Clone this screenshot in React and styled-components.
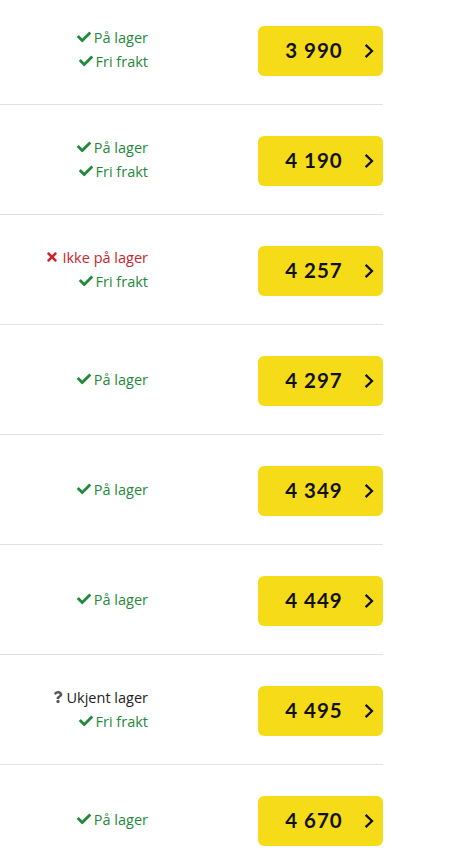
import React from 'react';
import styled, { createGlobalStyle } from 'styled-components';
import { FaCheck, FaTimes, FaQuestion } from 'react-icons/fa';

const GlobalStyle = createGlobalStyle`
  body {
    margin: 0;
    background: #fff;
    font-family: "Open Sans", Lato, sans-serif;
  }
`;

const List = styled.div`
  width: 383px;
  margin-top: -5px;
`;

const Row = styled.div`
  display: flex;
  align-items: center;
  justify-content: space-between;
  height: 109px;
  border-bottom: 1px solid #e2e2e6;
  &:last-child {
    border-bottom: none;
  }
`;

const Status = styled.div`
  width: 148px;
  display: flex;
  flex-direction: column;
  align-items: flex-end;
  gap: 1px;
  margin-top: -1px;
`;

const StatusLine = styled.div`
  display: flex;
  align-items: center;
  gap: 3px;
  font-size: 14.5px;
  line-height: 23px;
  color: ${(p) => p.$color};
  svg {
    flex: none;
  }
`;

const PriceButton = styled.button`
  display: flex;
  align-items: center;
  width: 125px;
  height: 50px;
  margin-top: 2px;
  padding: 0 9px 0 0;
  border: none;
  border-radius: 6px;
  background: #f6dc18;
  color: #111;
  cursor: pointer;
`;

const Price = styled.span`
  flex: 1;
  text-align: center;
  padding-left: 6px;
  margin-top: -2px;
  font-family: Lato, sans-serif;
  font-weight: 700;
  font-size: 20.5px;
  letter-spacing: 1px;
`;

const Chevron = () => (
  <svg width="10" height="16" viewBox="0 0 10 16">
    <path d="M1.6 1.8 L8 8 L1.6 14.2" fill="none" stroke="#111" strokeWidth="2.3" />
  </svg>
);

const green = '#1f8a3a';

const stock = {
  in: { color: green, icon: <FaCheck size={14} />, text: 'På lager' },
  out: { color: '#c9262c', icon: <FaTimes size={14} />, text: 'Ikke på lager' },
  unknown: { color: '#222', icon: <FaQuestion size={12} color="#555" />, text: 'Ukjent lager' },
};

const rows = [
  { price: '3 990', stock: 'in', free: true },
  { price: '4 190', stock: 'in', free: true },
  { price: '4 257', stock: 'out', free: true },
  { price: '4 297', stock: 'in', free: false },
  { price: '4 349', stock: 'in', free: false },
  { price: '4 449', stock: 'in', free: false },
  { price: '4 495', stock: 'unknown', free: true },
  { price: '4 670', stock: 'in', free: false },
];

export default function App() {
  return (
    <>
      <GlobalStyle />
      <List>
        {rows.map((r) => {
          const s = stock[r.stock];
          return (
            <Row key={r.price}>
              <Status>
                <StatusLine $color={s.color}>
                  {s.icon}
                  {s.text}
                </StatusLine>
                {r.free && (
                  <StatusLine $color={green}>
                    <FaCheck size={14} />
                    Fri frakt
                  </StatusLine>
                )}
              </Status>
              <PriceButton>
                <Price>{r.price}</Price>
                <Chevron />
              </PriceButton>
            </Row>
          );
        })}
      </List>
    </>
  );
}
